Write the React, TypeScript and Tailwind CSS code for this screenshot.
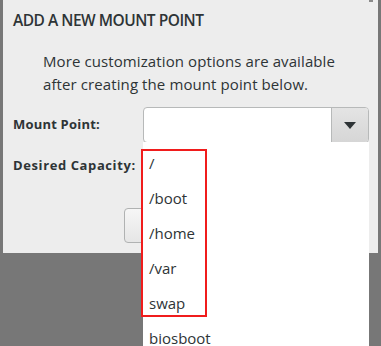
import React from "react";

const font = { fontFamily: '"Open Sans", "DejaVu Sans", sans-serif' };

export default function App() {
  const items = ["/", "/boot", "/home", "/var", "swap", "biosboot"];
  return (
    <div
      className="relative w-[381px] h-[346px] overflow-hidden bg-[#777777] pl-[3px]"
      style={font}
    >
      {/* dialog */}
      <div className="relative w-[375px] h-[253px] bg-[#ededed] text-[#2e3436]">
        <div className="pl-[10px] pt-[9px] text-[15.5px] leading-[22px] font-semibold tracking-[-0.5px]">
          ADD A NEW MOUNT POINT
        </div>
        <div className="pl-[40px] pt-[19px] text-[15px] leading-[23px] tracking-[0.1px] text-[#2e3436]">
          <div>More customization options are available</div>
          <div>after creating the mount point below.</div>
        </div>
        <div className="mt-[11px] flex items-center pl-[10px]">
          <div className="w-[130px] text-[13px] font-bold tracking-[0.2px]">Mount Point:</div>
          <div className="flex h-[36px] w-[226px] overflow-hidden rounded-[4px] border border-[#b7b9b9] bg-white">
            <div className="flex-1" />
            <div className="flex w-[37px] items-center justify-center border-l border-[#b7b9b9] bg-gradient-to-b from-[#e4e4e4] to-[#d6d6d6]">
              <svg width="12" height="7" viewBox="0 0 12 7">
                <path d="M0 0 L12 0 L6 7 Z" fill="#2e3436" />
              </svg>
            </div>
          </div>
        </div>
        <div className="mt-[13px] flex items-center pl-[10px]">
          <div className="text-[13px] font-bold tracking-[0.6px]">Desired Capacity:</div>
        </div>
        {/* button behind popup */}
        <div className="absolute left-[121px] top-[208px] h-[35px] w-[80px] rounded-[4px] border border-[#b0b2b2] bg-gradient-to-b from-[#f6f6f6] to-[#e6e6e6]" />
      </div>

      {/* top-right tiny mark */}
      <div className="absolute left-[369px] top-0 h-[2px] w-[4px] bg-[#8a8a8a]" />

      {/* dropdown popup */}
      <div className="absolute left-[143px] top-[142px] bottom-0 w-[226px] overflow-hidden bg-white pt-[3px]">
        {items.map((it) => (
          <div
            key={it}
            className="py-[9.5px] pl-[6px] text-[15px] leading-[16px] text-[#2e3436]"
          >
            {it}
          </div>
        ))}
      </div>

      {/* red highlight */}
      <div className="absolute left-[141px] top-[149px] h-[168px] w-[66px] border-2 border-[#f01c1c]" />
    </div>
  );
}
